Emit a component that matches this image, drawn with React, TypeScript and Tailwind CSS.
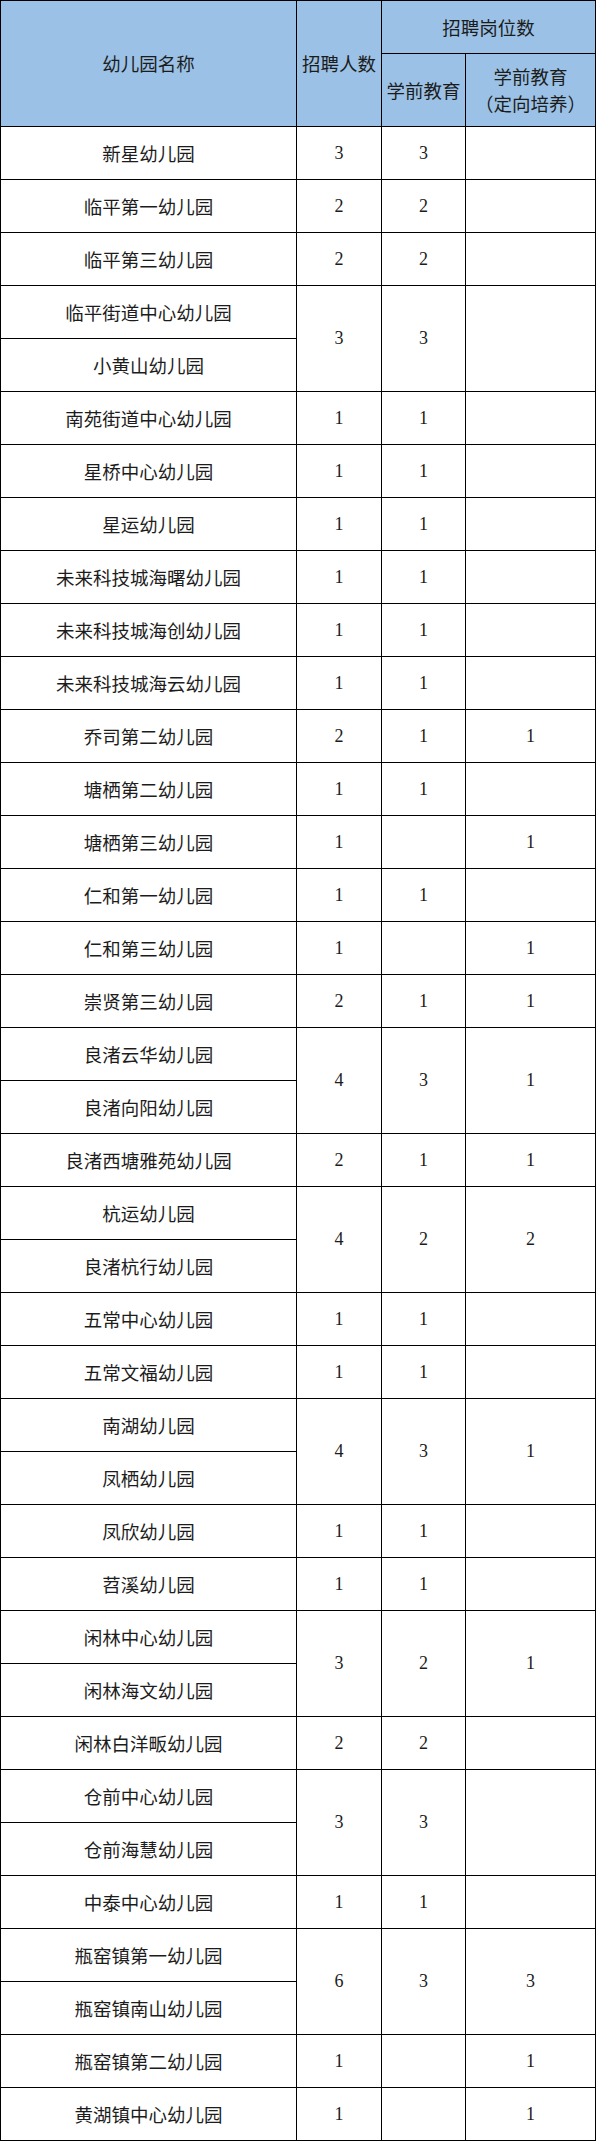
import React from 'react';

type Row = {
  names: string[];
  total: string;
  pre: string;
  directed: string;
};

const rows: Row[] = [
  { names: ['新星幼儿园'], total: '3', pre: '3', directed: '' },
  { names: ['临平第一幼儿园'], total: '2', pre: '2', directed: '' },
  { names: ['临平第三幼儿园'], total: '2', pre: '2', directed: '' },
  { names: ['临平街道中心幼儿园', '小黄山幼儿园'], total: '3', pre: '3', directed: '' },
  { names: ['南苑街道中心幼儿园'], total: '1', pre: '1', directed: '' },
  { names: ['星桥中心幼儿园'], total: '1', pre: '1', directed: '' },
  { names: ['星运幼儿园'], total: '1', pre: '1', directed: '' },
  { names: ['未来科技城海曙幼儿园'], total: '1', pre: '1', directed: '' },
  { names: ['未来科技城海创幼儿园'], total: '1', pre: '1', directed: '' },
  { names: ['未来科技城海云幼儿园'], total: '1', pre: '1', directed: '' },
  { names: ['乔司第二幼儿园'], total: '2', pre: '1', directed: '1' },
  { names: ['塘栖第二幼儿园'], total: '1', pre: '1', directed: '' },
  { names: ['塘栖第三幼儿园'], total: '1', pre: '', directed: '1' },
  { names: ['仁和第一幼儿园'], total: '1', pre: '1', directed: '' },
  { names: ['仁和第三幼儿园'], total: '1', pre: '', directed: '1' },
  { names: ['崇贤第三幼儿园'], total: '2', pre: '1', directed: '1' },
  { names: ['良渚云华幼儿园', '良渚向阳幼儿园'], total: '4', pre: '3', directed: '1' },
  { names: ['良渚西塘雅苑幼儿园'], total: '2', pre: '1', directed: '1' },
  { names: ['杭运幼儿园', '良渚杭行幼儿园'], total: '4', pre: '2', directed: '2' },
  { names: ['五常中心幼儿园'], total: '1', pre: '1', directed: '' },
  { names: ['五常文福幼儿园'], total: '1', pre: '1', directed: '' },
  { names: ['南湖幼儿园', '凤栖幼儿园'], total: '4', pre: '3', directed: '1' },
  { names: ['凤欣幼儿园'], total: '1', pre: '1', directed: '' },
  { names: ['苕溪幼儿园'], total: '1', pre: '1', directed: '' },
  { names: ['闲林中心幼儿园', '闲林海文幼儿园'], total: '3', pre: '2', directed: '1' },
  { names: ['闲林白洋畈幼儿园'], total: '2', pre: '2', directed: '' },
  { names: ['仓前中心幼儿园', '仓前海慧幼儿园'], total: '3', pre: '3', directed: '' },
  { names: ['中泰中心幼儿园'], total: '1', pre: '1', directed: '' },
  { names: ['瓶窑镇第一幼儿园', '瓶窑镇南山幼儿园'], total: '6', pre: '3', directed: '3' },
  { names: ['瓶窑镇第二幼儿园'], total: '1', pre: '', directed: '1' },
  { names: ['黄湖镇中心幼儿园'], total: '1', pre: '', directed: '1' },
];

const cell = 'border-r border-b border-black flex items-center justify-center text-center';
const head = `${cell} bg-[#9bc2e6]`;
const num = "font-['Liberation_Serif',serif] text-[18px]";

const App = () => {
  return (
    <div className="w-[596px] bg-white text-[#1c1c1c] font-['Noto_Sans_CJK_SC',sans-serif] text-[18.5px] leading-[27px]">
      <div className="grid grid-cols-[296px_85px_84px_130px] grid-rows-[53px_73px] auto-rows-[53px] border-t border-l border-black">
        <div className={`${head} row-span-2`}>幼儿园名称</div>
        <div className={`${head} row-span-2`}>招聘人数</div>
        <div className={`${head} col-span-2`}>招聘岗位数</div>
        <div className={head}>学前教育</div>
        <div className={`${head} flex-col`}>
          <span>学前教育</span>
          <span>（定向培养）</span>
        </div>

        {rows.map((row) => {
          const span = row.names.length === 2 ? 'row-span-2' : '';
          return (
            <React.Fragment key={row.names[0]}>
              <div className={cell}>{row.names[0]}</div>
              <div className={`${cell} ${span} ${num}`}>{row.total}</div>
              <div className={`${cell} ${span} ${num}`}>{row.pre}</div>
              <div className={`${cell} ${span} ${num}`}>{row.directed}</div>
              {row.names[1] && <div className={cell}>{row.names[1]}</div>}
            </React.Fragment>
          );
        })}
      </div>
    </div>
  );
};

export default App;
